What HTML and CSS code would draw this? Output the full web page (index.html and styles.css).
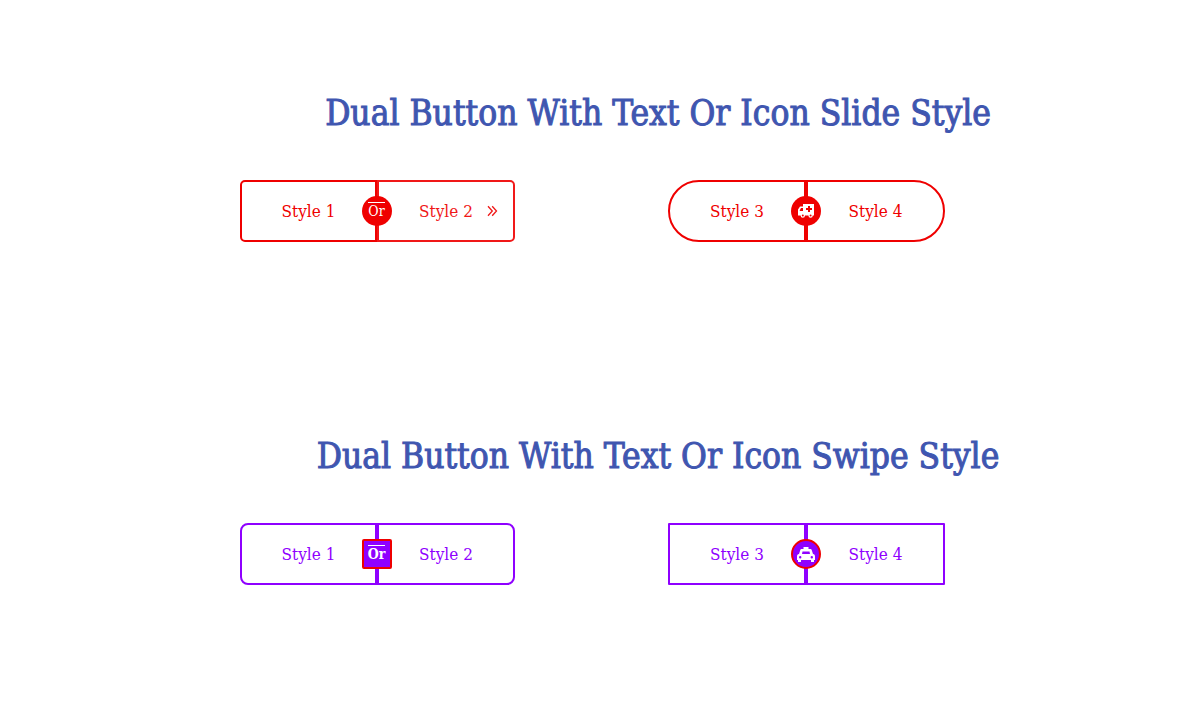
FILE: index.html
```html
<!DOCTYPE html>
<html lang="en">
<head>
<meta charset="utf-8">
<meta name="viewport" content="width=device-width, initial-scale=1">
<title>Dual Buttons</title>
<link rel="stylesheet" href="styles.css">
</head>
<body>
<main class="page">
  <section class="group slide">
    <h2 class="title">Dual Button With Text Or Icon Slide Style</h2>
    <div class="columns">
      <div class="dual soft">
        <a class="half" href="#s1">Style 1</a>
        <a class="half hovered" href="#s2">Style 2
          <svg class="chevrons" viewBox="0 0 11 12" aria-hidden="true"><path d="M1 1.2 5.3 6 1 10.8M5.2 1.2 9.5 6 5.2 10.8"/></svg>
        </a>
        <span class="badge round"><span class="or">Or</span></span>
      </div>
      <div class="dual pill wide">
        <a class="half" href="#s3">Style 3</a>
        <a class="half" href="#s4">Style 4</a>
        <span class="badge round">
          <svg class="icon" viewBox="0 0 18 16" aria-hidden="true"><path fill-rule="evenodd" d="M6 1h11v11.500h-1.200a2.200 2.200 0 0 1-4.400 0H8a2.200 2.200 0 0 1-4.400 0H1V6.500l2-3h3zM4 5 2.800 7.200V8H6V5zM11 3v2H9v2h2v2h2V7h2V5h-2V3zM5.800 11.500a1 1 0 1 0 0 2 1 1 0 0 0 0-2zm7.800 0a1 1 0 1 0 0 2 1 1 0 0 0 0-2z"/></svg>
        </span>
      </div>
    </div>
  </section>
  <section class="group swipe">
    <h2 class="title">Dual Button With Text Or Icon Swipe Style</h2>
    <div class="columns">
      <div class="dual curved">
        <a class="half" href="#w1">Style 1</a>
        <a class="half" href="#w2">Style 2</a>
        <span class="badge ringed"><span class="or strong">Or</span></span>
      </div>
      <div class="dual sharp wide">
        <a class="half" href="#w3">Style 3</a>
        <a class="half" href="#w4">Style 4</a>
        <span class="badge round ringed">
          <svg class="icon" viewBox="0 0 18 16" aria-hidden="true"><path fill-rule="evenodd" d="M6.500 1h5v2H13c1 0 1.500.3 1.700 1L16 8c1.400.3 2 1.200 2 2.500V14h-1v1.500a1.400 1.400 0 0 1-3 0V14H4v1.500a1.400 1.400 0 0 1-3 0V14H0v-3.500C0 9.200.6 8.300 2 8l1.300-4c.2-.7.700-1 1.700-1h1.500zM5.500 5.500 5 8h8l-.5-2.500zM3.200 10a1.200 1.200 0 1 0 0 2.400 1.200 1.200 0 0 0 0-2.400zm11.600 0a1.200 1.200 0 1 0 0 2.400 1.200 1.200 0 0 0 0-2.400z"/></svg>
        </span>
      </div>
    </div>
  </section>
</main>
</body>
</html>
```
FILE: styles.css
```css
* { box-sizing: border-box; }

body {
  margin: 0;
  background: #fff;
  font-family: "DejaVu Serif Condensed", "DejaVu Serif", serif;
}

.page {
  display: grid;
  gap: 189px;
  padding: 88px 96px 0 230px;
}

.slide { --main: #ef0000; }
.swipe { --main: #8f00ff; }

.title {
  margin: 0 0 42px;
  color: #3f56b0;
  -webkit-text-stroke: 1px #3f56b0;
  font-size: 35px;
  line-height: 50px;
  font-weight: 400;
  text-align: center;
  white-space: nowrap;
}

.columns {
  display: grid;
  grid-template-columns: 1fr 1fr;
  column-gap: 10px;
  justify-items: start;
  padding-left: 10px;
}

.dual {
  --radius: 5px;
  position: relative;
  display: flex;
}

.curved { --radius: 8px; }
.pill { --radius: 31px; }
.sharp { --radius: 1px; }

.half {
  position: relative;
  width: 137px;
  border: 2px solid var(--main);
  color: var(--main);
  font-size: 17px;
  line-height: 58px;
  text-align: center;
  text-decoration: none;
  white-space: nowrap;
}

.half:first-child { border-radius: var(--radius) 0 0 var(--radius); }
.half:nth-child(2) { width: 138px; border-radius: 0 var(--radius) var(--radius) 0; }
.wide .half:first-child { width: 138px; }
.wide .half:nth-child(2) { width: 139px; }

.hovered { opacity: 0.9; }

.chevrons {
  position: absolute;
  top: 23px;
  right: 15px;
  width: 11px;
  height: 12px;
  fill: none;
  stroke: currentColor;
  stroke-width: 1.3;
}

.badge {
  position: absolute;
  top: calc(50% - 15px);
  left: calc(50% - 16px);
  display: flex;
  align-items: center;
  justify-content: center;
  width: 30px;
  height: 30px;
  border-radius: 2px;
  background: var(--main);
  color: #fff;
}

.round { border-radius: 50%; }
.ringed { border: 2px solid #ef0000; }

.or {
  border-top: 1px solid #fff;
  font-size: 14px;
  font-weight: 500;
  line-height: 17px;
}

.strong { font-weight: 700; }

.icon {
  flex: none;
  width: 18px;
  height: 16px;
  fill: currentColor;
}
```
